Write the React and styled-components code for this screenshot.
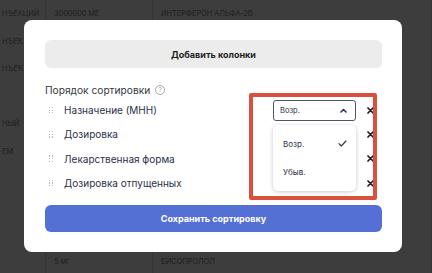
import React from 'react';
import styled, { createGlobalStyle } from 'styled-components';

const Global = createGlobalStyle`
	html, body {
		margin: 0;
		padding: 0;
		background: #3d3d3d;
	}
	* {
		box-sizing: border-box;
	}
`

const Screen = styled.div`
	position: relative;
	width: 432px;
	height: 273px;
	overflow: hidden;
	background: #3d3d3d;
	font-family: Inter, "Noto Sans", sans-serif;
`

const Table = styled.div`
	display: flex;
	flex-direction: column;
`

const TableRow = styled.div`
	display: grid;
	grid-template-columns: 46px 107px 1fr;
	height: 27.5px;
`

const Cell = styled.div`
	display: flex;
	align-items: center;
	padding-left: ${props => props.first ? 2 : 8}px;
	border-right: 1px solid #343434;
	white-space: nowrap;
	font-size: 7.5px;
	color: #1d1d1d;
	letter-spacing: -0.1px;
`

const Modal = styled.div`
	position: absolute;
	left: 24px;
	top: 20px;
	width: 378px;
	height: 232px;
	background: #fff;
	border-radius: 8px;
	padding: 20px 20px 20px 21px;
	display: flex;
	flex-direction: column;
`

const GreyButton = styled.div`
	height: 28px;
	border-radius: 6px;
	background: #ececec;
	display: flex;
	align-items: center;
	justify-content: center;
	font-size: 9px;
	font-weight: 700;
	color: #1e1e1e;
`

const Title = styled.div`
	display: flex;
	align-items: center;
	gap: 5px;
	margin-top: 16px;
	height: 12px;
	font-size: 10.2px;
	color: #333844;
`

const Help = styled.span`
	width: 10px;
	height: 10px;
	border-radius: 50%;
	border: 1px solid #a8a8a8;
	color: #a8a8a8;
	font-size: 6.5px;
	display: flex;
	align-items: center;
	justify-content: center;
`

const List = styled.div`
	display: flex;
	flex-direction: column;
	margin-top: 2px;
	position: relative;
`

const Row = styled.div`
	display: flex;
	align-items: center;
	height: 24.3px;
	padding: 0 8px 0 4px;
`

const Handle = styled.span`
	display: grid;
	grid-template-columns: repeat(2, 1.3px);
	gap: 1.4px 1.5px;
	margin-right: 11px;
	span {
		width: 1.3px;
		height: 1.3px;
		background: #b8b8b8;
	}
`

const Label = styled.span`
	flex: 1;
	font-size: 10px;
	color: #2a3048;
`

const Select = styled.div`
	position: relative;
	width: 83px;
	height: 21px;
	border: 1px solid #505565;
	border-radius: 3px;
	display: flex;
	align-items: center;
	justify-content: space-between;
	padding: 0 8px 0 6px;
	font-size: 7.5px;
	color: #2a3048;
	margin-right: 10px;
`

const Remove = styled.span`
	width: 8px;
	display: flex;
	justify-content: center;
`

const Menu = styled.div`
	position: absolute;
	top: 24px;
	left: -1px;
	width: 83px;
	height: 66px;
	background: #fff;
	border-radius: 5px;
	box-shadow: 0 1px 4px rgba(0, 0, 0, 0.22);
	display: flex;
	flex-direction: column;
	padding: 5px 0;
	z-index: 2;
`

const MenuItem = styled.div`
	flex: 1;
	display: flex;
	align-items: center;
	justify-content: space-between;
	padding: 0 9px 0 10px;
	font-size: 8px;
	color: #2a3048;
`

const Mark = styled.div`
	position: absolute;
	left: 204px;
	top: -5px;
	width: 128px;
	height: 107px;
	border: 4px solid #d9503f;
	border-radius: 2px;
	pointer-events: none;
`

const PrimaryButton = styled.div`
	margin-top: auto;
	height: 27px;
	border-radius: 6px;
	background: #5570d5;
	display: flex;
	align-items: center;
	justify-content: center;
	font-size: 9px;
	font-weight: 700;
	color: #fff;
`

const tableRows = [
	['НЪЕКЦИЙ', '3000000 МЕ', 'ИНТЕРФЕРОН АЛЬФА-2В'],
	['НЪЕК', '', ''],
	['НЪЕК', '', ''],
	['', '', ''],
	['НЫЙ', '', ''],
	['ЕМ', '', ''],
	['', '', ''],
	['', '', ''],
	['', '', ''],
	['', '5 мг', 'БИСОПРОЛОЛ'],
]

const sortFields = ['Назначение (МНН)', 'Дозировка', 'Лекарственная форма', 'Дозировка отпущенных']

const Cross = () => (
	<svg width="7" height="7" viewBox="0 0 7 7">
		<path d="M1 1L6 6M6 1L1 6" stroke="#1e1e1e" strokeWidth="1.7" strokeLinecap="round" />
	</svg>
)

const App = () => {
	return (
		<Screen>
			<Global />
			<Table>
				{tableRows.map((r, i) => (
					<TableRow key={i}>
						<Cell first>{r[0]}</Cell>
						<Cell>{r[1]}</Cell>
						<Cell>{r[2]}</Cell>
					</TableRow>
				))}
			</Table>
			<Modal>
				<GreyButton>Добавить колонки</GreyButton>
				<Title>
					Порядок сортировки
					<Help>?</Help>
				</Title>
				<List>
					{sortFields.map((f, i) => (
						<Row key={f}>
							<Handle>
								{[0, 1, 2, 3, 4, 5].map(d => <span key={d} />)}
							</Handle>
							<Label>{f}</Label>
							{i === 0 ? (
								<Select>
									Возр.
									<svg width="7" height="5" viewBox="0 0 7 5">
										<path d="M1 4L3.5 1.5L6 4" stroke="#2a3048" strokeWidth="1.5" fill="none" strokeLinecap="round" strokeLinejoin="round" />
									</svg>
									<Menu>
										<MenuItem>
											Возр.
											<svg width="9" height="7" viewBox="0 0 9 7">
												<path d="M1 3.6L3.3 6L8 1" stroke="#2a3048" strokeWidth="1.1" fill="none" strokeLinecap="round" strokeLinejoin="round" />
											</svg>
										</MenuItem>
										<MenuItem>Убыв.</MenuItem>
									</Menu>
								</Select>
							) : null}
							<Remove><Cross /></Remove>
						</Row>
					))}
					<Mark />
				</List>
				<PrimaryButton>Сохранить сортировку</PrimaryButton>
			</Modal>
		</Screen>
	)
}

export default App;
